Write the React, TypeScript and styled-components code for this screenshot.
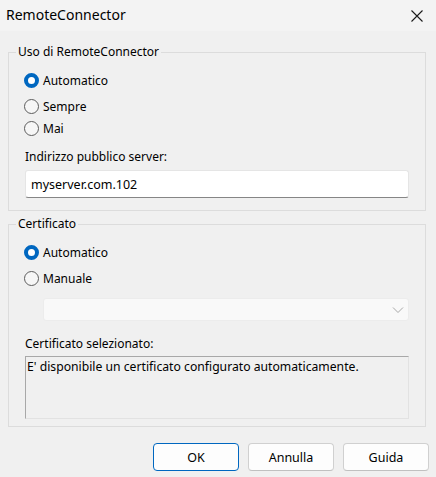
import React from 'react';
import styled, {createGlobalStyle} from 'styled-components';

const GlobalStyle = createGlobalStyle`
  html, body {
    margin: 0;
    padding: 0;
    background: #f0f0f0;
  }
  * {
    box-sizing: border-box;
  }
`;

const Window = styled.div`
  width: 436px;
  height: 477px;
  background: #f0f0f0;
  display: flex;
  flex-direction: column;
  font-family: 'Noto Sans', 'Open Sans', sans-serif;
  font-size: 12px;
  color: #000;
  overflow: hidden;
`;

const TitleBar = styled.div`
  height: 31px;
  background: #f3f3f3;
  display: flex;
  align-items: center;
  justify-content: space-between;
  padding: 0 13px 2px 6px;
  font-size: 14px;
`;

const CloseButton = styled.div`
  width: 12px;
  height: 12px;
  display: flex;
  margin-top: 2px;
`;

const Body = styled.div`
  padding: 13px 10px 0 8px;
  display: flex;
  flex-direction: column;
`;

const Group = styled.fieldset<{$gap?: number; $pb?: number}>`
  margin: ${({$gap}) => $gap ?? 0}px 0 0 0;
  padding: 0 16px ${({$pb}) => $pb ?? 12}px 16px;
  border: 1px solid #dcdcdc;
  min-width: 0;
`;

const Legend = styled.legend`
  margin-left: -9px;
  padding: 0 2px;
  line-height: 16px;
`;

const RadioRow = styled.label<{$mt: number}>`
  display: flex;
  align-items: center;
  height: 22px;
  margin-top: ${({$mt}) => $mt}px;
  gap: 4px;
`;

const RadioCircle = styled.span<{$checked?: boolean}>`
  width: 15px;
  height: 15px;
  margin-left: -1px;
  border-radius: 50%;
  flex-shrink: 0;
  background: ${({$checked}) => ($checked ? '#ffffff' : '#f6f6f6')};
  border: ${({$checked}) => ($checked ? '4.5px solid #0067c0' : '1px solid #5c5c5c')};
`;

const FieldLabel = styled.div<{$mt: number}>`
  margin-top: ${({$mt}) => $mt}px;
  line-height: 16px;
`;

const TextInput = styled.div`
  margin-top: 5px;
  height: 28px;
  background: #ffffff;
  border: 1px solid #e5e5e5;
  border-bottom: 1px solid #868686;
  border-radius: 3px;
  display: flex;
  align-items: center;
  padding-left: 5px;
  font-size: 12.5px;
`;

const Select = styled.div`
  margin: 9px 0 0 18px;
  height: 23px;
  background: #f9f9f9;
  border: 1px solid #ececec;
  border-radius: 3px;
  display: flex;
  align-items: center;
  justify-content: flex-end;
  padding-right: 4px;
`;

const InfoBox = styled.div`
  margin-top: 4px;
  height: 63px;
  border: 1px solid #a8a8a8;
  border-right-color: #e2e2e2;
  border-bottom-color: #e2e2e2;
  background: #f0f0f0;
  padding: 2px 0 0 1px;
  line-height: 16px;
  font-size: 12.2px;
`;

const ButtonBar = styled.div`
  display: flex;
  justify-content: flex-end;
  gap: 9px;
  margin: 16px -3px 0 0;
`;

const Button = styled.button<{$primary?: boolean}>`
  width: 86px;
  height: 28px;
  border-radius: 4px;
  background: #fdfdfd;
  border: 1px solid ${({$primary}) => ($primary ? '#0067c0' : '#d0d0d0')};
  border-bottom-color: ${({$primary}) => ($primary ? '#0067c0' : '#c0c0c0')};
  font-family: inherit;
  font-size: 12.5px;
  color: #000;
  padding: 0;
`;

const Radio: React.FC<{label: string; checked?: boolean; mt: number}> = ({label, checked, mt}) => (
    <RadioRow $mt={mt}>
        <RadioCircle $checked={checked}/>
        {label}
    </RadioRow>
);

const App: React.FC = () => (
    <Window>
        <GlobalStyle/>
        <TitleBar>
            <span>RemoteConnector</span>
            <CloseButton>
                <svg width="12" height="12" viewBox="0 0 12 12">
                    <path d="M0.5 0.5 L11.5 11.5 M11.5 0.5 L0.5 11.5" stroke="#1a1a1a" strokeWidth="1.1"/>
                </svg>
            </CloseButton>
        </TitleBar>
        <Body>
            <Group>
                <Legend>Uso di RemoteConnector</Legend>
                <Radio label="Automatico" checked mt={9}/>
                <Radio label="Sempre" mt={4}/>
                <Radio label="Mai" mt={0}/>
                <FieldLabel $mt={10}>Indirizzo pubblico server:</FieldLabel>
                <TextInput>myserver.com.102</TextInput>
            </Group>
            <Group $gap={5} $pb={7}>
                <Legend>Certificato</Legend>
                <Radio label="Automatico" checked mt={9}/>
                <Radio label="Manuale" mt={4}/>
                <Select>
                    <svg width="12" height="8" viewBox="0 0 12 8">
                        <path d="M1 1.5 L6 6.5 L11 1.5" fill="none" stroke="#a8a8a8" strokeWidth="1"/>
                    </svg>
                </Select>
                <FieldLabel $mt={15}>Certificato selezionato:</FieldLabel>
                <InfoBox>E' disponibile un certificato configurato automaticamente.</InfoBox>
            </Group>
            <ButtonBar>
                <Button $primary>OK</Button>
                <Button>Annulla</Button>
                <Button>Guida</Button>
            </ButtonBar>
        </Body>
    </Window>
);

export default App;
